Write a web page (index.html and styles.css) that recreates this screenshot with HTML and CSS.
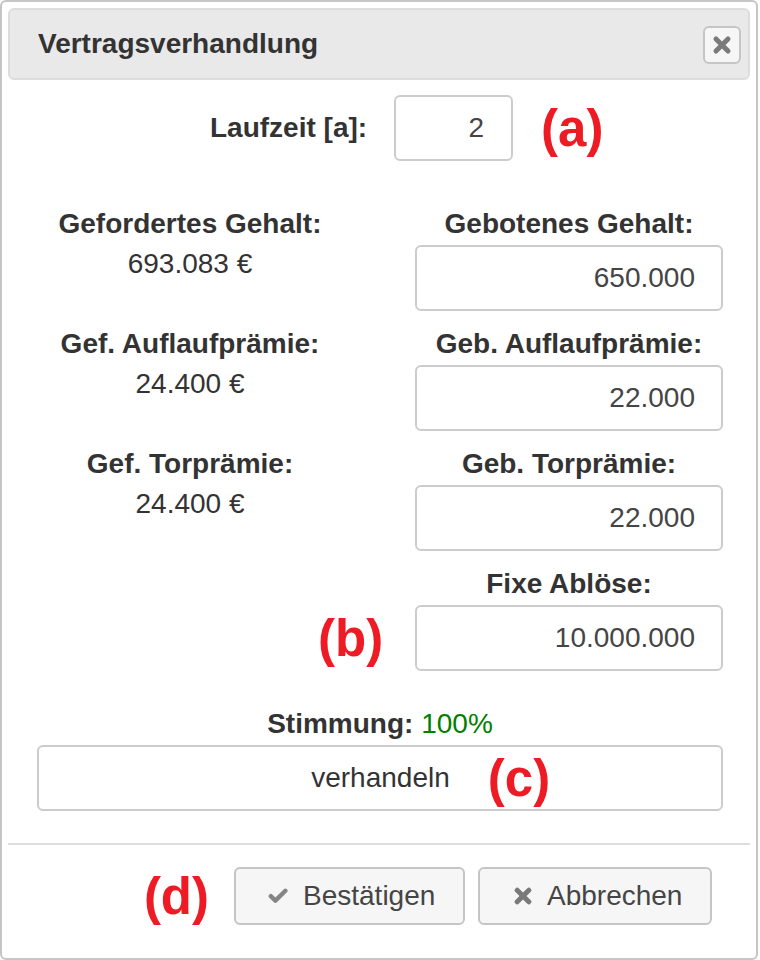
FILE: index.html
```html
<!DOCTYPE html>
<html lang="de">
<head>
<meta charset="utf-8">
<title>Vertragsverhandlung</title>
<link rel="stylesheet" href="styles.css">
</head>
<body>
<div class="dialog">
  <div class="titlebar">
    <span class="title">Vertragsverhandlung</span>
    <button class="close" type="button" aria-label="Schließen">
      <svg width="20" height="20" viewBox="0 0 20 20"><path d="M4 4 L16 16 M16 4 L4 16" stroke="#7a7a7a" stroke-width="5" stroke-linecap="round"/></svg>
    </button>
  </div>
  <div class="content">
    <div class="term-row">
      <label class="term-label">Laufzeit [a]:</label>
      <div class="field term-input">2</div>
      <span class="ann">(a)</span>
    </div>
    <div class="grid">
      <div class="cell">
        <div class="lbl">Gefordertes Gehalt:</div>
        <div class="val">693.083 €</div>
      </div>
      <div class="cell">
        <div class="lbl">Gebotenes Gehalt:</div>
        <div class="field">650.000</div>
      </div>
      <div class="cell">
        <div class="lbl">Gef. Auflaufprämie:</div>
        <div class="val">24.400 €</div>
      </div>
      <div class="cell">
        <div class="lbl">Geb. Auflaufprämie:</div>
        <div class="field">22.000</div>
      </div>
      <div class="cell">
        <div class="lbl">Gef. Torprämie:</div>
        <div class="val">24.400 €</div>
      </div>
      <div class="cell">
        <div class="lbl">Geb. Torprämie:</div>
        <div class="field">22.000</div>
      </div>
      <div class="cell cell-b">
        <span class="ann">(b)</span>
      </div>
      <div class="cell">
        <div class="lbl">Fixe Ablöse:</div>
        <div class="field">10.000.000</div>
      </div>
    </div>
    <div class="mood"><b>Stimmung:</b> <span class="pct">100%</span></div>
    <button class="negotiate" type="button"><span class="neg-text">verhandeln<span class="ann ann-c">(c)</span></span></button>
  </div>
  <div class="footer">
    <span class="ann ann-d">(d)</span>
    <button class="btn btn-ok" type="button">
      <svg class="ico" width="20" height="16" viewBox="0 0 20 16"><path d="M2.8 8.2 L7.4 12.6 L17.4 2.8" fill="none" stroke="#858585" stroke-width="4.4" stroke-linecap="round" stroke-linejoin="round"/></svg>
      <span>Bestätigen</span>
    </button>
    <button class="btn btn-cancel" type="button">
      <svg class="ico" width="18" height="18" viewBox="0 0 18 18"><path d="M3.2 3.2 L14.8 14.8 M14.8 3.2 L3.2 14.8" stroke="#7a7a7a" stroke-width="5" stroke-linecap="round"/></svg>
      <span>Abbrechen</span>
    </button>
  </div>
</div>
</body>
</html>
```

FILE: styles.css
```css
* { box-sizing: border-box; }

html, body {
  margin: 0;
  padding: 0;
  background: #ffffff;
}

body {
  font-family: "Liberation Sans", Arial, sans-serif;
  color: #333333;
  font-size: 28px;
}

.dialog {
  width: 758px;
  height: 960px;
  border: 2px solid #c5c5c5;
  border-radius: 6px;
  padding: 6px;
  display: flex;
  flex-direction: column;
  background: #ffffff;
}

.titlebar {
  height: 72px;
  flex: none;
  background: #e9e9e9;
  border: 2px solid #dddddd;
  border-radius: 6px;
  display: flex;
  align-items: center;
  justify-content: space-between;
  padding: 0 7px 0 28px;
}

.title {
  font-weight: bold;
  font-size: 28px;
  color: #333333;
}

.close {
  width: 38px;
  height: 38px;
  border: 2px solid #c5c5c5;
  border-radius: 6px;
  background: #f6f6f6;
  padding: 0;
  display: flex;
  align-items: center;
  justify-content: center;
  margin-top: 1px;
}

.content {
  padding: 0 27px 0 29px;
  flex: none;
}

.term-row {
  margin-top: 15px;
  height: 66px;
  display: flex;
  align-items: center;
}

.term-label {
  margin-left: 173px;
  font-weight: bold;
  line-height: 30px;
  margin-right: 27px;
}

.field {
  height: 66px;
  border: 2px solid #cccccc;
  border-radius: 6px;
  display: flex;
  align-items: center;
  justify-content: flex-end;
  padding-right: 26px;
  color: #454545;
  font-size: 28px;
}

.term-input {
  width: 119px;
  padding-right: 27px;
  margin-right: 28px;
}

.ann {
  color: #ed1c24;
  font-weight: bold;
  font-size: 51px;
  line-height: 1;
}

.grid {
  margin-top: 48px;
  display: grid;
  grid-template-columns: 306px 308px;
  column-gap: 72px;
  row-gap: 18px;
}

.cell {
  text-align: center;
}

.lbl {
  font-weight: bold;
  line-height: 30px;
  white-space: nowrap;
}

.cell .field {
  margin-top: 6px;
}

.val {
  margin-top: 10px;
  line-height: 30px;
}

.cell-b {
  padding-top: 36px;
  height: 102px;
  display: flex;
  align-items: center;
  padding-left: 281px;
  white-space: nowrap;
}

.mood {
  margin-top: 38px;
  line-height: 30px;
  text-align: center;
}

.pct {
  color: #008000;
}

.negotiate {
  margin-top: 6px;
  width: 100%;
  height: 66px;
  border: 2px solid #cccccc;
  border-radius: 6px;
  background: #ffffff;
  font-family: "Liberation Sans", Arial, sans-serif;
  font-size: 28px;
  color: #333333;
  display: flex;
  align-items: center;
  justify-content: center;
  padding: 0;
}

.neg-text {
  position: relative;
  padding-left: 1px;
}

.ann-c {
  position: absolute;
  left: calc(100% + 38px);
  top: 50%;
  transform: translateY(-50%);
}

.footer {
  margin-top: 32px;
  border-top: 2px solid #dddddd;
  padding-top: 22px;
  padding-right: 38px;
  display: flex;
  justify-content: flex-end;
  align-items: center;
  gap: 13px;
}

.ann-d {
  margin-right: 12px;
}

.btn {
  height: 58px;
  border: 2px solid #c5c5c5;
  border-radius: 6px;
  background: #f6f6f6;
  font-family: "Liberation Sans", Arial, sans-serif;
  font-size: 28px;
  color: #454545;
  display: flex;
  align-items: center;
  padding: 0 0 0 32px;
}

.btn .ico {
  margin-right: 15px;
  flex: none;
}

.btn-ok {
  width: 231px;
}

.btn-cancel {
  width: 234px;
  padding-left: 34px;
}
```
